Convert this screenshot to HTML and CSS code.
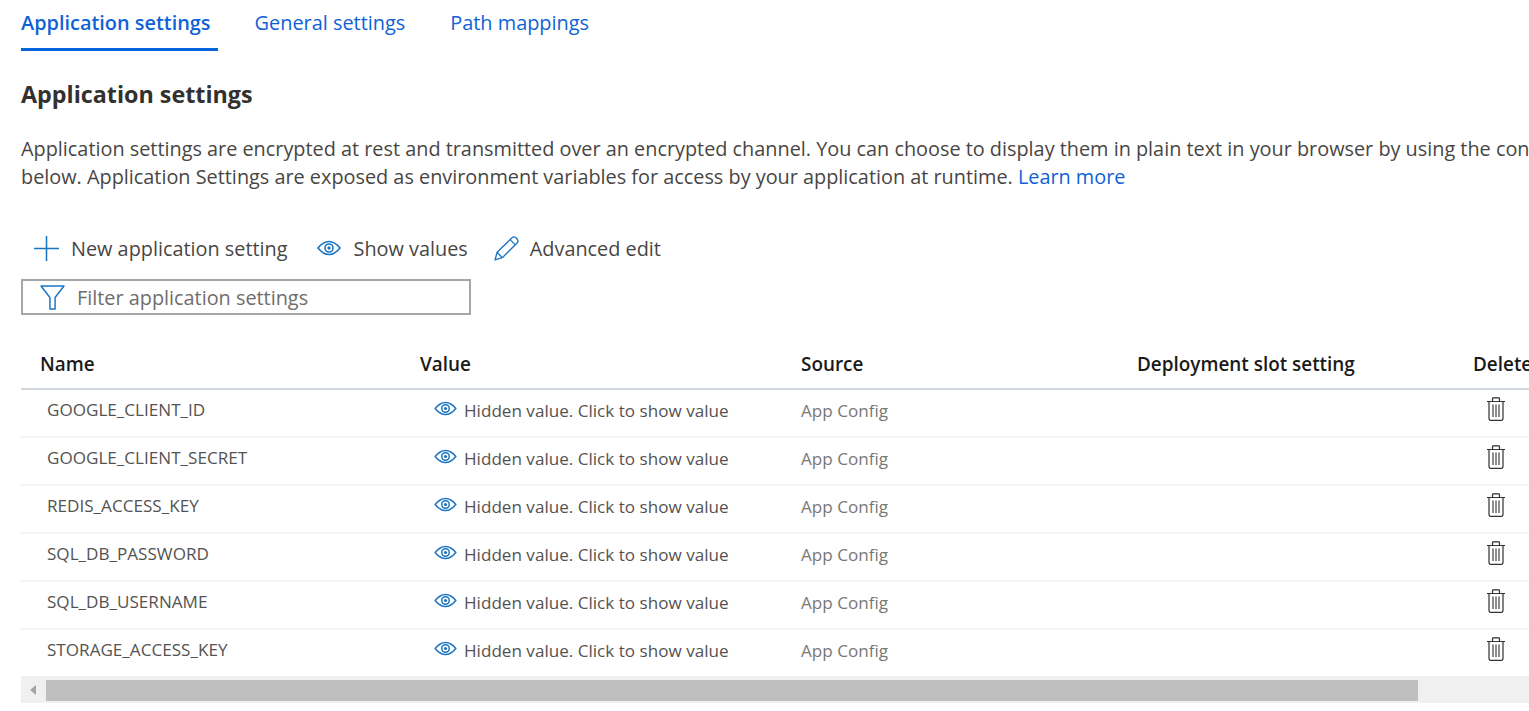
FILE: index.html
```html
<!DOCTYPE html>
<html lang="en">
<head>
<meta charset="UTF-8" />
<title>Application settings</title>
<link rel="stylesheet" href="styles.css">
</head>
<body>
<svg class="sprites" xmlns="http://www.w3.org/2000/svg">
  <symbol id="eye" viewBox="0 0 24 16">
    <path fill="none" stroke="currentColor" stroke-width="1.6" d="M1 8 C5 3 8.5 1.5 12 1.5 S19 3 23 8 C19 13 15.5 14.5 12 14.5 S5 13 1 8z"/>
    <circle fill="none" stroke="currentColor" stroke-width="1.6" cx="12" cy="8" r="4"/>
    <circle fill="currentColor" cx="12" cy="8" r="1.7"/>
  </symbol>
  <symbol id="trash" viewBox="0 0 20 24">
    <path fill="none" stroke="currentColor" stroke-width="1.2" d="M1 4.5 H19 M3 4.5 V21.5 Q3 23.4 5 23.4 H15 Q17 23.4 17 21.5 V4.5 M6.5 4.5 V1.6 Q6.5 .8 7.4 .8 H12.6 Q13.5 .8 13.5 1.6 V4.5"/>
    <path fill="none" stroke="currentColor" stroke-width="1.1" d="M7 7.5 V20 M10 7.5 V20 M13 7.5 V20"/>
  </symbol>
</svg>

<div class="tabs">
  <a class="tab active">Application settings</a>
  <a class="tab">General settings</a>
  <a class="tab">Path mappings</a>
</div>

<h2 class="title">Application settings</h2>
<p class="intro">Application settings are encrypted at rest and transmitted over an encrypted channel. You can choose to display them in plain text in your browser by using the controls<br>below. Application Settings are exposed as environment variables for access by your application at runtime. <a class="link">Learn more</a></p>

<div class="toolbar">
  <button class="cmd cmd-new">
    <svg class="cmd-icon plus" viewBox="0 0 24 24"><path fill="none" stroke="currentColor" stroke-width="1.5" d="M12 0 V24 M0 12 H24"/></svg>
    New application setting
  </button>
  <button class="cmd">
    <svg class="cmd-icon eye"><use href="#eye"/></svg>
    Show values
  </button>
  <button class="cmd">
    <svg class="cmd-icon pencil" viewBox="0 0 24 24"><path fill="none" stroke="currentColor" stroke-width="1.3" stroke-linejoin="round" d="M1 23 L3 15.5 L17.5 1.5 Q19 .3 20.5 1.2 L22.6 3.4 Q23.6 5 22.4 6.4 L8 20.8 Z M3 15.5 L8 20.8 M15.5 3.5 L20.5 8.5"/></svg>
    Advanced edit
  </button>
</div>

<div class="filter">
  <svg class="filter-icon" viewBox="0 0 24 24"><path fill="none" stroke="currentColor" stroke-width="1.4" stroke-linejoin="round" d="M1 1 H23 L14.5 12 V23 H9.5 V12 Z"/></svg>
  <span>Filter application settings</span>
</div>

<div class="grid">
  <div class="row head">
    <div class="c-name">Name</div>
    <div class="c-value">Value</div>
    <div class="c-source">Source</div>
    <div class="c-slot">Deployment slot setting</div>
    <div class="c-del">Delete</div>
  </div>
  <div class="row">
    <div class="c-name">GOOGLE_CLIENT_ID</div>
    <div class="c-value"><svg class="eye-sm"><use href="#eye"/></svg>Hidden value. Click to show value</div>
    <div class="c-source">App Config</div>
    <div class="c-slot"></div>
    <div class="c-del"><svg class="trash"><use href="#trash"/></svg></div>
  </div>
  <div class="row">
    <div class="c-name">GOOGLE_CLIENT_SECRET</div>
    <div class="c-value"><svg class="eye-sm"><use href="#eye"/></svg>Hidden value. Click to show value</div>
    <div class="c-source">App Config</div>
    <div class="c-slot"></div>
    <div class="c-del"><svg class="trash"><use href="#trash"/></svg></div>
  </div>
  <div class="row">
    <div class="c-name">REDIS_ACCESS_KEY</div>
    <div class="c-value"><svg class="eye-sm"><use href="#eye"/></svg>Hidden value. Click to show value</div>
    <div class="c-source">App Config</div>
    <div class="c-slot"></div>
    <div class="c-del"><svg class="trash"><use href="#trash"/></svg></div>
  </div>
  <div class="row">
    <div class="c-name">SQL_DB_PASSWORD</div>
    <div class="c-value"><svg class="eye-sm"><use href="#eye"/></svg>Hidden value. Click to show value</div>
    <div class="c-source">App Config</div>
    <div class="c-slot"></div>
    <div class="c-del"><svg class="trash"><use href="#trash"/></svg></div>
  </div>
  <div class="row">
    <div class="c-name">SQL_DB_USERNAME</div>
    <div class="c-value"><svg class="eye-sm"><use href="#eye"/></svg>Hidden value. Click to show value</div>
    <div class="c-source">App Config</div>
    <div class="c-slot"></div>
    <div class="c-del"><svg class="trash"><use href="#trash"/></svg></div>
  </div>
  <div class="row">
    <div class="c-name">STORAGE_ACCESS_KEY</div>
    <div class="c-value"><svg class="eye-sm"><use href="#eye"/></svg>Hidden value. Click to show value</div>
    <div class="c-source">App Config</div>
    <div class="c-slot"></div>
    <div class="c-del"><svg class="trash"><use href="#trash"/></svg></div>
  </div>
</div>

<div class="hscroll">
  <span class="hscroll-arrow"></span>
  <span class="hscroll-thumb"></span>
</div>
</body>
</html>
```

FILE: styles.css
```css
html, body {
  height: 100%;
}
body {
  margin: 0;
  padding: 0 0 0 21px;
  background: #fff;
  color: #323130;
  font-family: "Open Sans", "Noto Sans", sans-serif;
  font-size: 19.85px;
  overflow: hidden;
  box-sizing: border-box;
}
.sprites {
  display: none;
}
.tabs {
  display: flex;
  height: 51px;
}
.tab {
  color: #0f62d6;
  font-size: 19.9px;
  line-height: 46px;
  margin-right: 45px;
  white-space: nowrap;
}
.tab.active {
  font-weight: 600;
  border-bottom: 3px solid #0563dc;
  height: 48px;
  padding-right: 7px;
  margin-right: 37px;
}
.title {
  margin: 26px 0 0;
  font-size: 23.3px;
  font-weight: 700;
  line-height: 34px;
  color: #323130;
}
.intro {
  margin: 24px 0 0;
  line-height: 28px;
  white-space: nowrap;
  color: #484644;
}
.link {
  color: #0f62d6;
}
.toolbar {
  display: flex;
  margin-top: 35px;
  height: 44px;
}
.cmd {
  display: flex;
  align-items: center;
  background: none;
  border: none;
  padding: 0 14px 0 0;
  margin-right: 12px;
  font: inherit;
  color: #484644;
  white-space: nowrap;
}
.cmd-new {
  padding-left: 13px;
  padding-right: 17px;
}
.cmd-icon {
  color: #1a75c4;
  margin-right: 12px;
}
.plus {
  width: 25px;
  height: 25px;
}
.eye {
  width: 24px;
  height: 16px;
  margin-right: 13px;
}
.pencil {
  width: 25px;
  height: 25px;
  margin-right: 11px;
}
.filter {
  display: flex;
  align-items: center;
  width: 446px;
  height: 32px;
  margin-top: 9px;
  border: 2px solid #a6a6a6;
  color: #6f6d6b;
}
.filter-icon {
  width: 25px;
  height: 25px;
  margin: 0 12px 0 17px;
  color: #1a75c4;
}
.grid {
  margin-top: 30px;
  width: 1540px;
}
.row {
  display: grid;
  grid-template-columns: 380px 381px 336px 336px 107px;
  box-sizing: border-box;
  height: 48px;
  padding-bottom: 7px;
  align-items: center;
  border-bottom: 2px solid #f3f3f3;
  font-size: 17.1px;
  color: #555351;
}
.row:last-child {
  height: 46px;
  padding-bottom: 7px;
  border-bottom: none;
}
.row.head {
  height: 45px;
  padding-bottom: 0;
  border-bottom-color: #d2d8e0;
  font-size: 18.9px;
  font-weight: 600;
  color: #1b1a19;
  align-items: start;
  line-height: 38px;
}
.row.head > div {
  padding-left: 19px;
}
.row > .c-name {
  padding-left: 26px;
}
.row.head > .c-name {
  padding-left: 19px;
}
.c-value {
  display: flex;
  align-items: center;
  padding: 2px 0 0 33px;
  white-space: nowrap;
}
.row.head > .c-value {
  display: block;
  padding-top: 0;
}
.c-source {
  padding: 2px 0 0 19px;
  color: #797775;
}
.row.head > .c-source {
  padding-top: 0;
  color: #1b1a19;
}
.eye-sm {
  width: 23px;
  height: 15px;
  margin: 0 7px 4px 0;
  color: #1a75c4;
  flex: none;
}
.trash {
  display: block;
  width: 20px;
  height: 24px;
  margin: 0 0 1px 32px;
  color: #323130;
}
.hscroll {
  display: flex;
  align-items: center;
  height: 27px;
  background: #f0f0f0;
}
.hscroll-arrow {
  width: 0;
  height: 0;
  margin-left: 9px;
  border-top: 5px solid transparent;
  border-bottom: 5px solid transparent;
  border-right: 6px solid #a6a6a6;
}
.hscroll-thumb {
  width: 1372px;
  height: 21px;
  margin: 2px 0 0 10px;
  background: #bfbfbf;
}
```
